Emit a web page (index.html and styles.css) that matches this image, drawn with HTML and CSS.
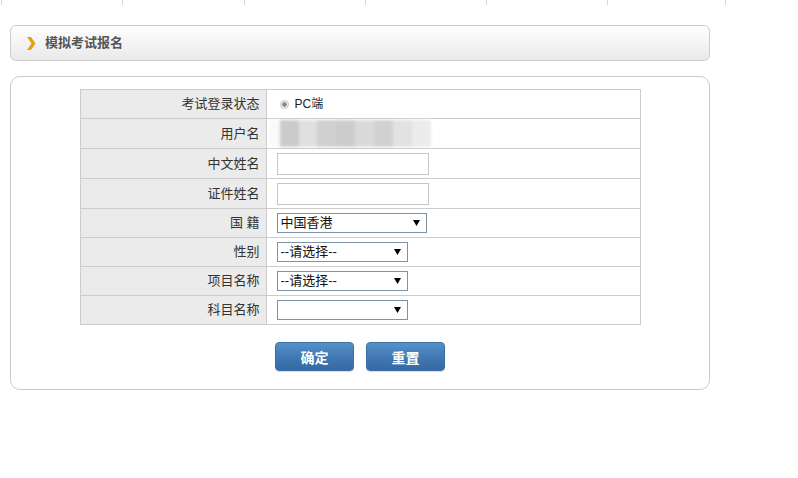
FILE: index.html
```html
<!DOCTYPE html>
<html lang="zh-CN">
<head>
  <meta charset="UTF-8">
  <title>模拟考试报名</title>
  <link rel="stylesheet" href="styles.css">
</head>
<body>
  <div class="topnav">
    <span></span><span></span><span></span><span></span><span></span><span></span>
  </div>

  <div class="titlebar">
    <svg class="arrow" width="9" height="13" viewBox="0 0 9 13">
      <polygon points="0,0 4,0 8.5,6.5 4,13 0,13 4.5,6.5" fill="#e4a10c"/>
    </svg>
    <span>模拟考试报名</span>
  </div>

  <div class="panel">
    <table class="form">
      <tr class="r29">
        <td class="lbl">考试登录状态</td>
        <td class="val"><label class="radio"><span class="dot"></span>PC端</label></td>
      </tr>
      <tr class="r30">
        <td class="lbl">用户名</td>
        <td class="val">
          <div class="mosaic">
            <i style="background:#e6e6e6"></i><i style="background:#cbcbcb"></i><i style="background:#e0e0e0"></i><i style="background:#d0d0d0"></i><i style="background:#cccccc"></i><i style="background:#dadada"></i><i style="background:#d0d2d0"></i><i style="background:#e2e2e2"></i><i style="background:#ececec"></i>
          </div>
        </td>
      </tr>
      <tr class="r30">
        <td class="lbl">中文姓名</td>
        <td class="val"><input type="text" class="txt"></td>
      </tr>
      <tr class="r30">
        <td class="lbl">证件姓名</td>
        <td class="val"><input type="text" class="txt"></td>
      </tr>
      <tr class="r29">
        <td class="lbl">国&nbsp;籍</td>
        <td class="val">
          <select class="sel wide"><option>中国香港</option></select>
        </td>
      </tr>
      <tr class="r29">
        <td class="lbl">性别</td>
        <td class="val">
          <select class="sel"><option>--请选择--</option></select>
        </td>
      </tr>
      <tr class="r29">
        <td class="lbl">项目名称</td>
        <td class="val">
          <select class="sel"><option>--请选择--</option></select>
        </td>
      </tr>
      <tr class="r29">
        <td class="lbl">科目名称</td>
        <td class="val">
          <select class="sel"><option></option></select>
        </td>
      </tr>
    </table>

    <div class="buttons">
      <button class="btn">确定</button>
      <button class="btn">重置</button>
    </div>
  </div>
</body>
</html>
```

FILE: styles.css
```css
* { margin: 0; padding: 0; box-sizing: border-box; }
body {
  font-family: "Liberation Sans", "Noto Sans CJK SC", sans-serif;
  font-size: 13px;
  color: #333;
  background: #fff;
}
.topnav {
  display: flex;
  height: 5px;
  padding-left: 1px;
}
.topnav span {
  width: 121.3px;
  height: 5px;
  border-left: 1px solid #d6d6d6;
}
.topnav span:last-child { border-right: 1px solid #d6d6d6; width: 119px; }
.titlebar {
  margin: 20px 0 0 10px;
  width: 700px;
  height: 36px;
  border: 1px solid #cdcdcd;
  border-radius: 6px;
  background: linear-gradient(#fefefe, #f4f4f4 50%, #e9e9e9);
  display: flex;
  align-items: center;
  padding-left: 16px;
  gap: 9px;
}
.titlebar span {
  font-weight: bold;
  color: #555;
  font-size: 13px;
  line-height: 16px;
  margin-top: -1px;
}
.panel {
  margin: 15px 0 0 10px;
  width: 700px;
  height: 314px;
  border: 1px solid #cbcbcb;
  border-radius: 10px;
  padding-top: 12px;
}
.form {
  width: 561px;
  margin: 0 auto;
  border-collapse: collapse;
}
.form td {
  border: 1px solid #cccccc;
  padding: 0;
  line-height: 16px;
}
.r29 td { height: 29px; }
.r30 td { height: 30px; }
.lbl {
  width: 186px;
  background: #ebebeb;
  text-align: right;
  padding-right: 6px !important;
  color: #333;
}
.val { padding-left: 10px !important; }
.radio {
  display: flex;
  align-items: center;
  gap: 6px;
  margin-left: 3px;
  color: #222;
  font-size: 12px;
}
.dot {
  width: 9px;
  height: 9px;
  border-radius: 50%;
  border: 1px solid #c4c4c4;
  background: radial-gradient(circle, #8a8a8a 0 2px, #f2f2f2 2.5px);
}
.mosaic {
  display: flex;
  width: 162px;
  height: 27px;
  margin-left: -8px;
  filter: blur(1.6px);
}
.mosaic i { flex: 1; }
.mosaic i:first-child { background: #fafafa !important; flex: 0.6; }
.txt {
  display: block;
  width: 152px;
  height: 22px;
  border: 1px solid #c6c6c6;
  background: #fff;
}
.sel {
  display: block;
  appearance: none;
  -webkit-appearance: none;
  width: 131px;
  height: 20px;
  border: 1px solid #7f93a8;
  border-radius: 0;
  background: #fff url("data:image/svg+xml,%3Csvg xmlns='http://www.w3.org/2000/svg' width='7' height='6'%3E%3Cpolygon points='0,0 7,0 3.5,6' fill='%23000'/%3E%3C/svg%3E") no-repeat right 6px center;
  font-family: "Liberation Sans", "Noto Sans CJK SC", sans-serif;
  font-size: 13px;
  color: #111;
  padding-left: 3px;
  line-height: 18px;
}
.sel.wide { width: 150px; }
.buttons {
  display: flex;
  justify-content: center;
  gap: 12px;
  margin-top: 17px;
}
.btn {
  width: 79px;
  height: 29px;
  border: 1px solid #3b6ea3;
  border-radius: 4px;
  background: linear-gradient(#5590c9, #3f78b3 55%, #3669a2);
  color: #fff;
  font-family: "Noto Sans CJK SC", sans-serif;
  font-weight: bold;
  font-size: 14px;
  box-shadow: 0 1px 1px rgba(0,0,0,0.15);
  cursor: pointer;
}
```
